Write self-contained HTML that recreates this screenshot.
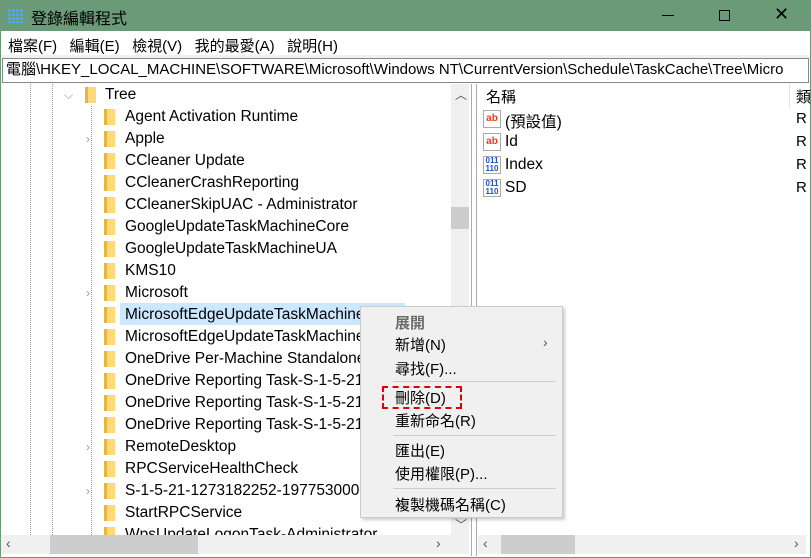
<!DOCTYPE html><html><head><meta charset="utf-8"><style>
*{margin:0;padding:0;box-sizing:border-box}
body{width:811px;height:558px;overflow:hidden;background:#6a9a78;font-family:"Liberation Sans","Noto Sans CJK TC",sans-serif;font-size:15px;color:#000;position:relative}
.a{position:absolute}
.t{white-space:nowrap}
.fold{position:absolute;width:11px;height:16px;background:linear-gradient(90deg,#e8b640 0 3px,#ffd97a 3px)}
.row{position:absolute;height:22px;line-height:22px;white-space:nowrap;font-size:15.5px}
.dv{position:absolute;border-left:1px dotted #999;width:0}
.chev{position:absolute;color:#999;font-size:12px}
.mi{position:absolute;left:34px;white-space:nowrap;font-size:15px}
.sep{position:absolute;left:32px;right:6px;height:1px;background:#ccc}
.ic{position:absolute;width:18px;height:18px;border:1px solid #aaa;background:#fff;font-size:10px;font-weight:bold;text-align:center;line-height:15px}
</style></head><body>
<div class="a" style="left:7px;top:8px;width:16px;height:15px;background-image:linear-gradient(#6a9a78 0 1px,transparent 1px),linear-gradient(90deg,#6a9a78 0 1px,transparent 1px);background-size:4px 4px;background-color:#4fa8e8"></div>
<div class="a t" style="left:31px;top:5px;font-size:16px;color:#000">登錄編輯程式</div>
<div class="a" style="left:662px;top:15px;width:12px;height:1px;background:#000"></div>
<div class="a" style="left:719px;top:10px;width:11px;height:11px;border:1px solid #000"></div>
<div class="a t" style="left:774px;top:4px;font-size:18px">✕</div>
<div class="a" style="left:1px;top:31px;width:809px;height:526px;background:#fff"></div>
<div class="a t" style="left:8px;top:35px;font-size:15px">檔案(F)&nbsp;&nbsp;&nbsp;編輯(E)&nbsp;&nbsp;&nbsp;檢視(V)&nbsp;&nbsp;&nbsp;我的最愛(A)&nbsp;&nbsp;&nbsp;說明(H)</div>
<div class="a" style="left:1px;top:55px;width:809px;height:3px;background:#f0f0f0"></div>
<div class="a t" style="left:2px;top:58px;width:807px;height:25px;border:1px solid #828790;padding-left:3px;line-height:22px;font-size:15px;overflow:hidden">電腦\HKEY_LOCAL_MACHINE\SOFTWARE\Microsoft\Windows NT\CurrentVersion\Schedule\TaskCache\Tree\Micro</div>
<div class="a" style="left:1px;top:84px;width:468px;height:451px;overflow:hidden">
<div class="dv" style="left:29px;top:0;height:451px"></div>
<div class="dv" style="left:51px;top:0;height:451px"></div>
<div class="dv" style="left:90px;top:22px;height:429px"></div>
<div class="chev" style="left:63px;top:4px">⌵</div>
<div class="fold" style="left:84px;top:3px"></div>
<div class="row" style="left:104px;top:0">Tree</div>
<div class="a" style="left:119px;top:219px;width:285px;height:22px;background:#cce8ff"></div>
</div>
<div class="a" style="left:1px;top:85px;width:450px;height:450px;overflow:hidden">
<div class="row" style="left:124px;top:21px">Agent Activation Runtime</div>
<div class="row" style="left:124px;top:43px">Apple</div>
<div class="row" style="left:124px;top:65px">CCleaner Update</div>
<div class="row" style="left:124px;top:87px">CCleanerCrashReporting</div>
<div class="row" style="left:124px;top:109px">CCleanerSkipUAC - Administrator</div>
<div class="row" style="left:124px;top:131px">GoogleUpdateTaskMachineCore</div>
<div class="row" style="left:124px;top:153px">GoogleUpdateTaskMachineUA</div>
<div class="row" style="left:124px;top:175px">KMS10</div>
<div class="row" style="left:124px;top:197px">Microsoft</div>
<div class="row" style="left:124px;top:219px">MicrosoftEdgeUpdateTaskMachineCore</div>
<div class="row" style="left:124px;top:241px">MicrosoftEdgeUpdateTaskMachineUA</div>
<div class="row" style="left:124px;top:263px">OneDrive Per-Machine Standalone Update</div>
<div class="row" style="left:124px;top:285px">OneDrive Reporting Task-S-1-5-21</div>
<div class="row" style="left:124px;top:307px">OneDrive Reporting Task-S-1-5-21</div>
<div class="row" style="left:124px;top:329px">OneDrive Reporting Task-S-1-5-21</div>
<div class="row" style="left:124px;top:351px">RemoteDesktop</div>
<div class="row" style="left:124px;top:373px">RPCServiceHealthCheck</div>
<div class="row" style="left:124px;top:395px">S-1-5-21-1273182252-1977530000</div>
<div class="row" style="left:124px;top:417px">StartRPCService</div>
<div class="row" style="left:124px;top:439px">WpsUpdateLogonTask-Administrator</div>
<div class="fold" style="left:103px;top:24px"></div><div class="fold" style="left:103px;top:46px"></div><div class="fold" style="left:103px;top:68px"></div><div class="fold" style="left:103px;top:90px"></div><div class="fold" style="left:103px;top:112px"></div><div class="fold" style="left:103px;top:134px"></div><div class="fold" style="left:103px;top:156px"></div><div class="fold" style="left:103px;top:178px"></div><div class="fold" style="left:103px;top:200px"></div><div class="fold" style="left:103px;top:222px"></div><div class="fold" style="left:103px;top:244px"></div><div class="fold" style="left:103px;top:266px"></div><div class="fold" style="left:103px;top:288px"></div><div class="fold" style="left:103px;top:310px"></div><div class="fold" style="left:103px;top:332px"></div><div class="fold" style="left:103px;top:354px"></div><div class="fold" style="left:103px;top:376px"></div><div class="fold" style="left:103px;top:398px"></div><div class="fold" style="left:103px;top:420px"></div><div class="fold" style="left:103px;top:442px"></div>
<div class="chev" style="left:85px;top:47px">›</div><div class="chev" style="left:85px;top:201px">›</div><div class="chev" style="left:85px;top:355px">›</div><div class="chev" style="left:85px;top:399px">›</div>
</div>
<div class="a" style="left:451px;top:84px;width:18px;height:451px;background:#f0f0f0"></div>
<div class="a" style="left:451px;top:207px;width:18px;height:22px;background:#cdcdcd"></div>
<div class="a t" style="left:455px;top:86px;font-size:12px;color:#555">︿</div>
<div class="a t" style="left:455px;top:516px;font-size:12px;color:#555">﹀</div>
<div class="a" style="left:1px;top:535px;width:468px;height:19px;background:#f0f0f0"></div>
<div class="a" style="left:50px;top:535px;width:148px;height:19px;background:#cdcdcd"></div>
<div class="a t" style="left:6px;top:535px;font-size:14px;color:#555">‹</div>
<div class="a t" style="left:436px;top:535px;font-size:14px;color:#555">›</div>
<div class="a" style="left:469px;top:84px;width:9px;height:472px;background:#fff"></div>
<div class="a" style="left:471px;top:84px;width:1px;height:472px;background:#aaa"></div>
<div class="a" style="left:476px;top:84px;width:1px;height:472px;background:#aaa"></div>
<div class="a t" style="left:486px;top:86px">名稱</div>
<div class="a" style="left:789px;top:84px;width:1px;height:24px;background:#e5e5e5"></div>
<div class="a t" style="left:796px;top:86px">類</div>
<div class="ic" style="left:483px;top:110px;color:#e04020">ab</div><div class="a t" style="left:505px;top:110px;font-size:15.5px">(預設值)</div>
<div class="ic" style="left:483px;top:133px;color:#e04020">ab</div><div class="a t" style="left:505px;top:133px;font-size:15.5px">Id</div>
<div class="ic" style="left:483px;top:156px;color:#2050c0;font-size:8px;line-height:8px">011<br>110</div><div class="a t" style="left:505px;top:156px;font-size:15.5px">Index</div>
<div class="ic" style="left:483px;top:179px;color:#2050c0;font-size:8px;line-height:8px">011<br>110</div><div class="a t" style="left:505px;top:179px;font-size:15.5px">SD</div>
<div class="a t" style="left:796px;top:110px">R</div><div class="a t" style="left:796px;top:133px">R</div><div class="a t" style="left:796px;top:156px">R</div><div class="a t" style="left:796px;top:179px">R</div>
<div class="a" style="left:478px;top:535px;width:328px;height:19px;background:#f0f0f0"></div>
<div class="a" style="left:501px;top:535px;width:74px;height:19px;background:#cdcdcd"></div>
<div class="a t" style="left:483px;top:535px;font-size:14px;color:#555">‹</div>
<div class="a t" style="left:794px;top:535px;font-size:14px;color:#555">›</div>
<div class="a" style="left:360px;top:306px;width:203px;height:212px;background:#f0f0f0;border:1px solid #ccc;box-shadow:2px 2px 3px rgba(0,0,0,.2)">
<div class="mi" style="top:5px;font-weight:bold;color:#6d6d6d">展開</div>
<div class="mi" style="top:27px">新增(N)</div><div class="a" style="left:182px;top:27px;font-size:14px;color:#555">›</div>
<div class="mi" style="top:51px">尋找(F)...</div>
<div class="sep" style="top:74px"></div>
<div class="mi" style="top:80px">刪除(D)</div>
<div class="a" style="left:21px;top:79px;width:80px;height:23px;border:2px dashed #e00000"></div>
<div class="mi" style="top:103px">重新命名(R)</div>
<div class="sep" style="top:128px"></div>
<div class="mi" style="top:133px">匯出(E)</div>
<div class="mi" style="top:156px">使用權限(P)...</div>
<div class="sep" style="top:181px"></div>
<div class="mi" style="top:187px">複製機碼名稱(C)</div>
</div>
</body></html>
